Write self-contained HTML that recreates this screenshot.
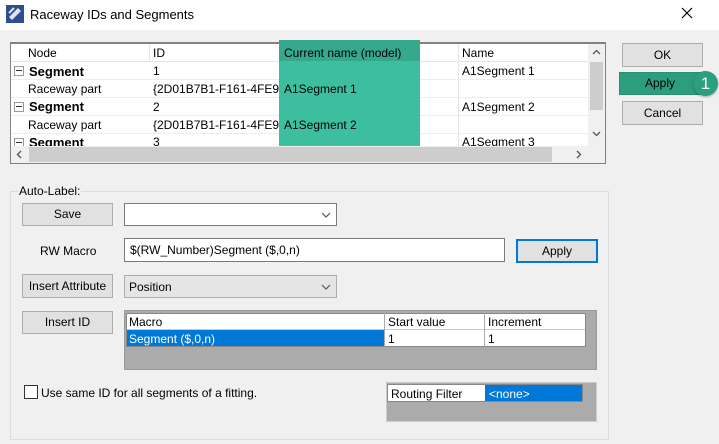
<!DOCTYPE html>
<html><head><style>
*{box-sizing:border-box;margin:0;padding:0}
body{width:719px;height:444px;background:#f0f0f0;font-family:"Liberation Sans",sans-serif;font-size:12px;color:#000;position:relative;overflow:hidden}
.a{position:absolute}
.btn{position:absolute;background:#e1e1e1;border:1px solid #adadad;text-align:center;font-size:12px}
.cell{position:absolute;white-space:nowrap}
.exp{position:absolute;width:10px;height:10px;border:1px solid #999;background:#fff}
.exp::after{content:"";position:absolute;left:1px;top:3px;width:6px;height:1px;background:#333}
</style></head><body>
<div class="a" style="left:0;top:0;width:719px;height:30px;background:#fff"></div>
<svg class="a" style="left:6px;top:5px" width="18" height="18"><rect x="0" y="0" width="18" height="18" fill="#2e4f8f"/><path d="M3 12 L12 3 L15 6 L6 15Z" fill="#dfe6f2"/><path d="M3 8 L8 3" stroke="#dfe6f2" stroke-width="2"/></svg>
<div class="a" style="left:30px;top:7px;font-size:13px">Raceway IDs and Segments</div>
<svg class="a" style="left:681px;top:7px" width="12" height="12"><path d="M1 1L11 11M11 1L1 11" stroke="#000" stroke-width="1.2"/></svg>

<div class="a" style="left:10px;top:42px;width:596px;height:122px;background:#fff;border:1px solid #828282;border-top:2px solid #828282"></div>
<div class="a" style="left:11px;top:44px;width:577px;height:18px;background:#fff;border-bottom:1px solid #e5e5e5"></div>
<div class="a" style="left:149px;top:44px;width:1px;height:17px;background:#e5e5e5"></div>
<div class="a" style="left:458px;top:44px;width:1px;height:102px;background:#e5e5e5"></div>
<div class="a" style="left:11px;top:79px;width:577px;height:1px;background:#eee"></div>
<div class="a" style="left:11px;top:97px;width:577px;height:1px;background:#eee"></div>
<div class="a" style="left:11px;top:115px;width:577px;height:1px;background:#eee"></div>
<div class="a" style="left:11px;top:133px;width:577px;height:1px;background:#eee"></div>
<div class="a" style="left:279px;top:40px;width:141px;height:106px;background:#3dbf9f"></div>
<div class="a" style="left:279px;top:40px;width:141px;height:21px;background:#36a98c"></div>
<div class="cell" style="left:28px;top:46px">Node</div>
<div class="cell" style="left:153px;top:46px">ID</div>
<div class="cell" style="left:284px;top:46px">Current name (model)</div>
<div class="cell" style="left:462px;top:46px">Name</div>
<div class="exp" style="left:14px;top:66px"></div>
<div class="cell" style="left:29px;top:64px;font-weight:bold;font-size:13px">Segment</div>
<div class="cell" style="left:153px;top:64px">1</div>
<div class="cell" style="left:462px;top:64px">A1Segment 1</div>
<div class="cell" style="left:28px;top:82px">Raceway part</div>
<div class="cell" style="left:153px;top:82px;width:126px;overflow:hidden">{2D01B7B1-F161-4FE9-</div>
<div class="cell" style="left:284px;top:82px">A1Segment 1</div>
<div class="exp" style="left:14px;top:102px"></div>
<div class="cell" style="left:29px;top:99px;font-weight:bold;font-size:13px">Segment</div>
<div class="cell" style="left:153px;top:100px">2</div>
<div class="cell" style="left:462px;top:100px">A1Segment 2</div>
<div class="cell" style="left:28px;top:118px">Raceway part</div>
<div class="cell" style="left:153px;top:118px;width:126px;overflow:hidden">{2D01B7B1-F161-4FE9-</div>
<div class="cell" style="left:284px;top:118px">A1Segment 2</div>
<div class="a" style="left:11px;top:134px;width:577px;height:12px;overflow:hidden">
<div class="exp" style="left:3px;top:4px"></div>
<div class="cell" style="left:18px;top:1px;font-weight:bold;font-size:13px">Segment</div>
<div class="cell" style="left:142px;top:1px">3</div>
<div class="cell" style="left:451px;top:1px">A1Segment 3</div></div>
<div class="a" style="left:588px;top:44px;width:17px;height:102px;background:#f0f0f0"></div>
<div class="a" style="left:590px;top:62px;width:13px;height:48px;background:#cdcdcd"></div>
<svg class="a" style="left:592px;top:49px" width="9" height="6"><path d="M1 5L4.5 1.5L8 5" stroke="#555" fill="none" stroke-width="1.3"/></svg>
<svg class="a" style="left:592px;top:131px" width="9" height="6"><path d="M1 1L4.5 4.5L8 1" stroke="#555" fill="none" stroke-width="1.3"/></svg>
<div class="a" style="left:11px;top:146px;width:594px;height:17px;background:#f0f0f0"></div>
<div class="a" style="left:29px;top:147px;width:523px;height:15px;background:#cdcdcd"></div>
<svg class="a" style="left:16px;top:150px" width="6" height="9"><path d="M5 1L1.5 4.5L5 8" stroke="#555" fill="none" stroke-width="1.3"/></svg>
<svg class="a" style="left:576px;top:150px" width="6" height="9"><path d="M1 1L4.5 4.5L1 8" stroke="#555" fill="none" stroke-width="1.3"/></svg>

<div class="btn" style="left:622px;top:43px;width:81px;height:24px;line-height:22px">OK</div>
<div class="btn" style="left:619px;top:72px;width:82px;height:23px;line-height:21px;background:#2c9d7f;border-color:#2a8f74">Apply</div>
<div class="a" style="left:693px;top:71px;width:25px;height:25px;border-radius:50%;background:#2aa081;color:#fff;font-size:17px;text-align:center;line-height:25px;box-shadow:0 1px 2px rgba(0,0,0,.3)">1</div>
<div class="btn" style="left:622px;top:101px;width:81px;height:24px;line-height:22px">Cancel</div>

<div class="a" style="left:10px;top:191px;width:599px;height:249px;border:1px solid #dcdcdc"></div>
<div class="cell" style="left:18px;top:184px;background:#f0f0f0;padding:0 1px">Auto-Label:</div>
<div class="btn" style="left:22px;top:203px;width:91px;height:23px;line-height:21px">Save</div>
<div class="a" style="left:124px;top:203px;width:213px;height:23px;background:#fff;border:1px solid #7a7a7a"></div>
<svg class="a" style="left:321px;top:212px" width="10" height="6"><path d="M1 1L5 5L9 1" stroke="#555" fill="none" stroke-width="1.2"/></svg>
<div class="cell" style="left:40px;top:244px">RW Macro</div>
<div class="a" style="left:124px;top:238px;width:381px;height:24px;background:#fff;border:1px solid #7a7a7a"></div>
<div class="cell" style="left:130px;top:243px">$(RW_Number)Segment ($,0,n)</div>
<div class="btn" style="left:516px;top:239px;width:82px;height:24px;line-height:21px;border:2px solid #0078d7">Apply</div>
<div class="btn" style="left:22px;top:274px;width:91px;height:24px;line-height:22px">Insert Attribute</div>
<div class="a" style="left:124px;top:275px;width:213px;height:23px;background:#e5e5e5;border:1px solid #adadad"></div>
<div class="cell" style="left:129px;top:280px">Position</div>
<svg class="a" style="left:321px;top:284px" width="10" height="6"><path d="M1 1L5 5L9 1" stroke="#555" fill="none" stroke-width="1.2"/></svg>
<div class="btn" style="left:22px;top:311px;width:91px;height:23px;line-height:21px">Insert ID</div>
<div class="a" style="left:124px;top:310px;width:473px;height:60px;background:#ababab;border:1px solid #999"></div>
<div class="a" style="left:126px;top:313px;width:460px;height:34px;background:#fff;border:1px solid #888"></div>
<div class="a" style="left:127px;top:329px;width:458px;height:1px;background:#ccc"></div>
<div class="a" style="left:384px;top:313px;width:1px;height:34px;background:#aaa"></div>
<div class="a" style="left:484px;top:313px;width:1px;height:34px;background:#aaa"></div>
<div class="a" style="left:127px;top:330px;width:257px;height:16px;background:#0078d7"></div>
<div class="cell" style="left:129px;top:315px">Macro</div>
<div class="cell" style="left:388px;top:315px">Start value</div>
<div class="cell" style="left:488px;top:315px">Increment</div>
<div class="cell" style="left:129px;top:332px;color:#fff">Segment ($,0,n)</div>
<div class="cell" style="left:388px;top:332px">1</div>
<div class="cell" style="left:488px;top:332px">1</div>
<div class="a" style="left:24px;top:385px;width:14px;height:14px;background:#fff;border:1px solid #333"></div>
<div class="cell" style="left:41px;top:386px">Use same ID for all segments of a fitting.</div>
<div class="a" style="left:386px;top:382px;width:211px;height:40px;background:#ababab;border:1px solid #ccc"></div>
<div class="a" style="left:387px;top:384px;width:196px;height:18px;background:#fff;border:1px solid #888"></div>
<div class="a" style="left:485px;top:385px;width:97px;height:16px;background:#0078d7"></div>
<div class="cell" style="left:391px;top:387px">Routing Filter</div>
<div class="cell" style="left:489px;top:387px;color:#fff">&lt;none&gt;</div>
</body></html>
